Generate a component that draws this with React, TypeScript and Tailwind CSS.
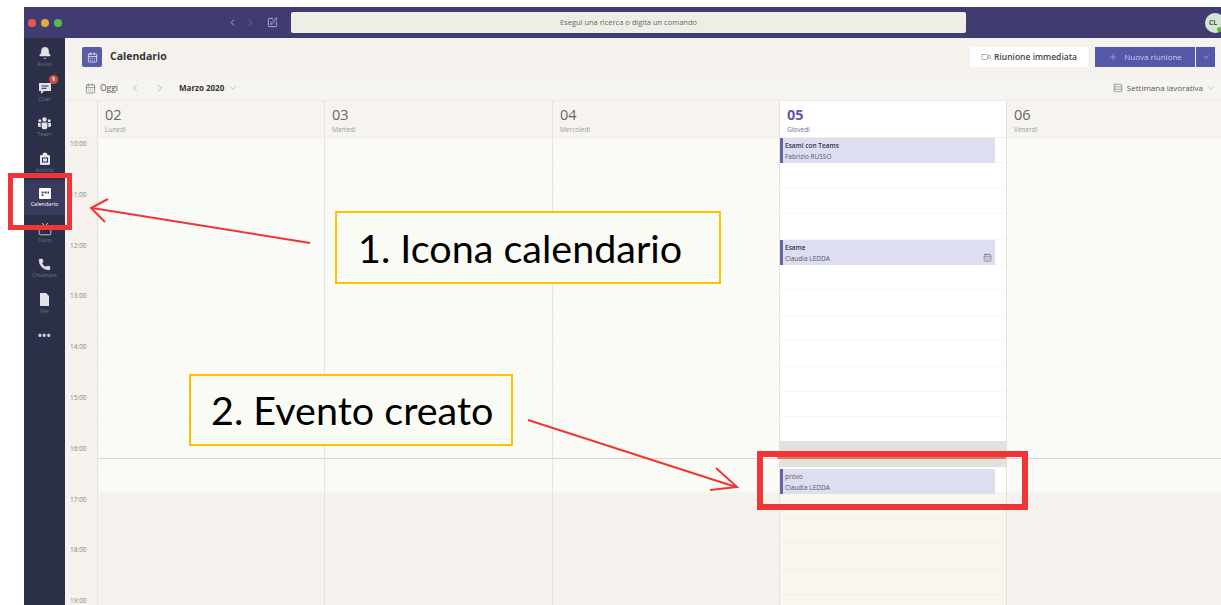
import {
  Bell,
  CalendarDays,
  ChevronDown,
  ChevronLeft,
  ChevronRight,
  Phone,
  Plus,
  Rows3,
  SquarePen,
  Tv,
  Video,
} from 'lucide-react'

function ChatIcon() {
  return (
    <svg width="14" height="14" viewBox="0 0 14 14">
      <path d="M1 2h12v8H6l-3 3v-3H1z" fill="currentColor" />
      <path d="M3.5 5h7M3.5 7.3h5" stroke="#2b3048" strokeWidth="1" />
    </svg>
  )
}

function TeamIcon() {
  return (
    <svg width="15" height="14" viewBox="0 0 15 14" fill="currentColor">
      <circle cx="7.5" cy="3.5" r="2.2" />
      <circle cx="2.8" cy="4.8" r="1.5" />
      <circle cx="12.2" cy="4.8" r="1.5" />
      <path d="M4.6 6.6h5.8v3.8a2.9 2.9 0 0 1-5.8 0z" />
      <path d="M1 7h2.7v4H2.4A1.4 1.4 0 0 1 1 9.6zM11.3 7H14v2.6a1.4 1.4 0 0 1-1.4 1.4h-1.3z" />
    </svg>
  )
}

function ActivityIcon() {
  return (
    <svg width="14" height="15" viewBox="0 0 14 15">
      <path d="M2 5q0-1 1-1h1.5a2.5 2.5 0 0 1 5 0H11q1 0 1 1v8q0 1-1 1H3q-1 0-1-1z" fill="currentColor" />
      <rect x="4.5" y="7" width="5" height="4" fill="none" stroke="#2b3048" strokeWidth="1" />
    </svg>
  )
}

function AgendaIcon() {
  return (
    <svg width="14" height="13" viewBox="0 0 14 13">
      <rect x="1" y="1" width="12" height="11" rx="1" fill="#fff" />
      <path d="M3.5 4.5h2v2h-2zM6.5 4.5h2v2h-2zM9.5 4.5h1.500v2H9.500zM3.5 7.500h2v1.500h-2z" fill="#383a5e" />
    </svg>
  )
}

function FileIcon() {
  return (
    <svg width="13" height="15" viewBox="0 0 13 15">
      <path d="M2 1h6l3 3v10H2z" fill="currentColor" />
    </svg>
  )
}

const railItems = [
  { label: 'Avvisi', icon: <Bell size={14} fill="currentColor" strokeWidth={1} /> },
  { label: 'Chat', icon: <ChatIcon />, badge: true },
  { label: 'Team', icon: <TeamIcon /> },
  { label: 'Attività', icon: <ActivityIcon /> },
  { label: 'Calendario', icon: <AgendaIcon />, active: true },
  { label: 'Tutto', icon: <Tv size={14} strokeWidth={1.4} /> },
  { label: 'Chiamate', icon: <Phone size={13} fill="currentColor" strokeWidth={1} /> },
  { label: 'File', icon: <FileIcon /> },
]

const days = [
  { num: '02', name: 'Lunedì', width: 'w-[227px]' },
  { num: '03', name: 'Martedì', width: 'w-[228px]' },
  { num: '04', name: 'Mercoledì', width: 'w-[227px]' },
  { num: '05', name: 'Giovedì', width: 'w-[227px]', today: true },
  { num: '06', name: 'Venerdì', width: 'flex-1' },
]

const hours = ['10:00', '11:00', '12:00', '13:00', '14:00', '15:00', '16:00', '17:00', '18:00', '19:00']
const slots = Array.from({ length: 19 }, (_, i) => i)

function CalendarEvent({ title, who, top, bold, icon }: { title: string; who: string; top: string; bold?: boolean; icon?: boolean }) {
  return (
    <div className={`absolute left-0 w-[215px] h-[25px] ${top} bg-[#dddff0] border-l-[3px] border-[#6264a7] pl-[2px] flex flex-col justify-center text-[6.5px] leading-[11px] text-[#55566a]`}>
      <span className={bold ? 'font-semibold text-[#33344a]' : ''}>{title}</span>
      <span>{who}</span>
      {icon && <CalendarDays size={9} strokeWidth={1.5} className="absolute right-[3px] bottom-[3px] text-[#666]" />}
    </div>
  )
}

function DayColumn({ today, width, children }: { today?: boolean; width: string; children?: React.ReactNode }) {
  return (
    <div className={`relative ${width} h-full border-l border-[#e5e3df]`}>
      {slots.map((i) => {
        const offHours = i >= 14
        let bg = offHours ? 'bg-[#f5f1ec]' : 'bg-[#fafbf6]'
        if (today && !offHours) bg = 'bg-white'
        if (today && offHours) bg = 'bg-[#f9f5ef]'
        const line = offHours ? 'border-[#f3efe9]' : today ? 'border-[#f8f8f5]' : 'border-[#f6f7f1]'
        return <div key={i} className={`h-[25.4px] border-b ${bg} ${line}`} />
      })}
      {children}
    </div>
  )
}

export default function App() {
  return (
    <div className="relative w-[1221px] h-[605px] overflow-hidden bg-white pl-[24px] pt-[7px] font-['Open_Sans',sans-serif]">
      {/* Title bar */}
      <div className="flex items-center h-[31px] bg-[#403c72]">
        <div className="flex items-center gap-[5px] pl-[4px] w-[203px]">
          <span className="w-[8px] h-[8px] rounded-full bg-[#e5584f]" />
          <span className="w-[8px] h-[8px] rounded-full bg-[#e3a93a]" />
          <span className="w-[8px] h-[8px] rounded-full bg-[#5bb94e]" />
        </div>
        <ChevronLeft size={11} className="text-[#b9b8d4]" />
        <ChevronRight size={11} className="ml-[7px] text-[#77749f]" />
        <SquarePen size={11} className="ml-[11px] text-[#b9b8d4]" />
        <div className="ml-[13px] flex items-center justify-center w-[675px] h-[21px] rounded-[2px] bg-[#efeee6] text-[7.5px] text-[#666]">
          Esegui una ricerca o digita un comando
        </div>
        <div className="relative ml-auto -mr-[4px] flex items-center pl-[4px] w-[20px] h-[20px] rounded-full bg-[#d5e4d3] text-[6.5px] font-bold text-[#3f5a45]">
          CL
          <span className="absolute right-[3px] bottom-[1px] w-[5px] h-[5px] rounded-full bg-[#6fae45]" />
        </div>
      </div>

      <div className="flex h-[567px]">
        {/* App rail */}
        <nav className="flex flex-col w-[41px] shrink-0 pt-[1px] bg-[#2b3048]">
          {railItems.map(({ label, icon, badge, active }) => (
            <div
              key={label}
              className={`relative flex flex-col items-center justify-center gap-[1px] h-[35.3px] ${active ? 'bg-[#383a5e] text-white' : 'text-[#e2e2ea]'}`}
            >
              {icon}
              <span className={`text-[5.5px] leading-[7px] ${active ? '' : 'text-[#6f7389]'}`}>{label}</span>
              {badge && (
                <span className="absolute top-[1px] right-[7px] flex items-center justify-center w-[9px] h-[9px] rounded-full bg-[#c7533f] text-[6px] font-bold text-white">
                  1
                </span>
              )}
            </div>
          ))}
          <div className="pt-[8px] text-center text-[10px] font-bold leading-[12px] tracking-[0.5px] text-[#d7d7e2]">•••</div>
        </nav>

        <main className="flex flex-col flex-1 min-w-0">
          {/* Calendar heading */}
          <header className="flex items-center h-[38px] shrink-0 pl-[17px] pr-[6px] bg-[#f6f3ee]">
            <div className="flex items-center justify-center w-[20px] h-[20px] rounded-[2px] bg-[#5b5ca8]">
              <CalendarDays size={11} className="text-[#dcdcf0]" />
            </div>
            <h1 className="ml-[8px] text-[10.5px] font-bold text-[#333]">Calendario</h1>
            <button className="ml-auto flex items-center justify-center gap-[3px] w-[118px] h-[20px] bg-white text-[8.5px] font-semibold text-[#444]">
              <Video size={10} strokeWidth={1.2} className="text-[#666]" />
              Riunione immediata
            </button>
            <button className="ml-[7px] flex items-center justify-center gap-[6px] w-[100px] h-[20px] bg-[#5558a8] text-[8px] text-[#c9cbe8]">
              <Plus size={10} strokeWidth={1.2} />
              Nuova riunione
            </button>
            <button className="ml-[1px] flex items-center justify-center w-[19px] h-[20px] bg-[#5558a8] text-[#aeb0dc]">
              <ChevronDown size={10} />
            </button>
          </header>

          {/* Date navigation */}
          <div className="flex items-center h-[24px] shrink-0 pl-[20px] pr-[5px] bg-[#f6f4ef] text-[#555]">
            <CalendarDays size={11} strokeWidth={1.2} />
            <span className="ml-[4px] text-[8.5px]">Oggi</span>
            <ChevronLeft size={12} strokeWidth={1.2} className="ml-[11px] text-[#888]" />
            <ChevronRight size={12} strokeWidth={1.2} className="ml-[13px] text-[#888]" />
            <span className="ml-[13px] text-[8px] font-bold text-[#333]">Marzo 2020</span>
            <ChevronDown size={10} strokeWidth={1.2} className="ml-[4px] text-[#888]" />
            <Rows3 size={10} strokeWidth={1.2} className="ml-auto" />
            <span className="ml-[4px] text-[8px]">Settimana lavorativa</span>
            <ChevronDown size={10} strokeWidth={1.2} className="ml-[3px] text-[#999]" />
          </div>

          {/* Day headings */}
          <div className="flex h-[38px] shrink-0 pl-[32px] bg-[#f7f4ef] border-t border-[#eeebe5] border-b border-b-[#f1eee8]">
            {days.map((d) => (
              <div
                key={d.num}
                className={`${d.width} pl-[7px] pt-[5px] border-l border-[#e5e3df] ${d.today ? 'bg-white' : ''}`}
              >
                <div className={`text-[14.5px] leading-[18px] ${d.today ? 'font-bold text-[#5b5ca8]' : 'text-[#666]'}`}>{d.num}</div>
                <div className={`text-[6.5px] leading-[9px] mt-[1px] ${d.today ? 'text-[#6c6e96]' : 'text-[#999]'}`}>{d.name}</div>
              </div>
            ))}
          </div>

          {/* Week grid */}
          <div className="relative flex flex-1 min-h-0 overflow-hidden">
            <div className="flex flex-col w-[32px] shrink-0 bg-[#f5f1ec] pt-[1px]">
              {hours.map((h) => (
                <div key={h} className="h-[50.8px] shrink-0 pl-[5px] text-[6.5px] leading-[9px] text-[#888]">
                  {h}
                </div>
              ))}
            </div>
            {days.map((d) => (
              <DayColumn key={d.num} today={d.today} width={d.width}>
                {d.today && (
                  <>
                    <CalendarEvent title="Esami con Teams" who="Fabrizio RUSSO" top="top-0" bold />
                    <CalendarEvent title="Esame" who="Claudia LEDDA" top="top-[102px]" bold icon />
                    <div className="absolute left-0 right-0 top-[303px] h-[26px] bg-[#e2e1dd]" />
                    <CalendarEvent title="provo" who="Claudia LEDDA" top="top-[331px]" />
                  </>
                )}
              </DayColumn>
            ))}
            {/* Current time */}
            <div className="absolute left-[32px] right-0 top-[320px] h-px bg-[#eccfc6]" />
            <div className="absolute left-[712px] w-[229px] top-[319px] h-[2px] bg-[#d9795f]" />
          </div>
        </main>
      </div>

      {/* Callouts drawn over the app */}
      <div className="absolute left-[8px] top-[173px] w-[64px] h-[57px] border-[5px] border-[#ef3535]" />
      <div className="absolute left-[757px] top-[451px] w-[271px] h-[59px] border-[6px] border-[#ef3535]" />
      <div className="absolute left-[335px] top-[211px] flex items-center w-[386px] h-[73px] pl-[21px] bg-[#fafbf5] border-2 border-[#ffc000] font-['Lato',sans-serif] text-[39.5px] text-black">
        1. Icona calendario
      </div>
      <div className="absolute left-[189px] top-[374px] flex items-center w-[324px] h-[72px] pl-[20px] bg-[#fafbf5] border-2 border-[#ffc000] font-['Lato',sans-serif] text-[39.5px] text-black">
        2. Evento creato
      </div>
      <svg className="absolute left-0 top-0 pointer-events-none" width="1221" height="605" fill="none" stroke="#ef3535" strokeWidth="2">
        <path d="M310 243 92 208" />
        <path d="M108 199 91 208 105 222" />
        <path d="M528 420 736 487" />
        <path d="M716 468 737 487 710 490" />
      </svg>
    </div>
  )
}
